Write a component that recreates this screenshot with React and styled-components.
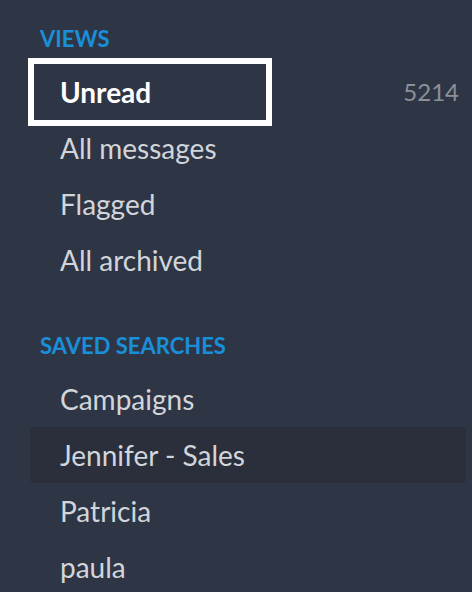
import React from 'react';
import styled, { createGlobalStyle } from 'styled-components';

const GlobalStyle = createGlobalStyle`
    html, body {
      margin: 0;
      padding: 0;
      background: #2e3646;
    }

    body {
      font-family: Lato, 'Liberation Sans', sans-serif;
      -webkit-font-smoothing: antialiased;
    }
`;

const Sidebar = styled.nav`
    width: 472px;
    height: 592px;
    overflow: hidden;
    background: #2e3646;
    padding-top: 27px;
    box-sizing: border-box;
`;

const Section = styled.section`
    margin-top: ${p => p.gap || 0}px;
`;

const SectionTitle = styled.h3`
    margin: 0 0 13px 40px;
    font-size: 22px;
    line-height: 24px;
    font-weight: 700;
    color: #1a8fd9;
`;

const List = styled.ul`
    list-style: none;
    margin: 0;
    padding: 0;
`;

const Row = styled.li`
    display: flex;
    align-items: center;
    justify-content: space-between;
    margin-left: 30px;
    width: 436px;
    height: 56px;
    padding: 0 7px 0 30px;
    box-sizing: border-box;
    border-radius: 4px;
    background: ${p => (p.hover ? '#2a2f3b' : 'transparent')};
    font-size: 28px;
    line-height: 56px;
    color: #d2d5da;
`;

const FocusRow = styled(Row)`
    padding-left: 4px;
`;

const FocusBox = styled.span`
    display: block;
    width: 232px;
    height: 56px;
    padding-left: 26px;
    box-sizing: border-box;
    outline: 6px solid #ffffff;
    color: #ffffff;
    font-weight: 700;
`;

const Count = styled.span`
    font-size: 24px;
    color: #8b9099;
`;

function App() {
    return (
        <>
        <GlobalStyle />
        <Sidebar>
            <Section>
                <SectionTitle>VIEWS</SectionTitle>
                <List>
                    <FocusRow>
                        <FocusBox>Unread</FocusBox>
                        <Count>5214</Count>
                    </FocusRow>
                    <Row>All messages</Row>
                    <Row>Flagged</Row>
                    <Row>All archived</Row>
                </List>
            </Section>
            <Section gap={46}>
                <SectionTitle>SAVED SEARCHES</SectionTitle>
                <List>
                    <Row>Campaigns</Row>
                    <Row hover>Jennifer - Sales</Row>
                    <Row>Patricia</Row>
                    <Row>paula</Row>
                </List>
            </Section>
        </Sidebar>
        </>
    );
}

export default App;
